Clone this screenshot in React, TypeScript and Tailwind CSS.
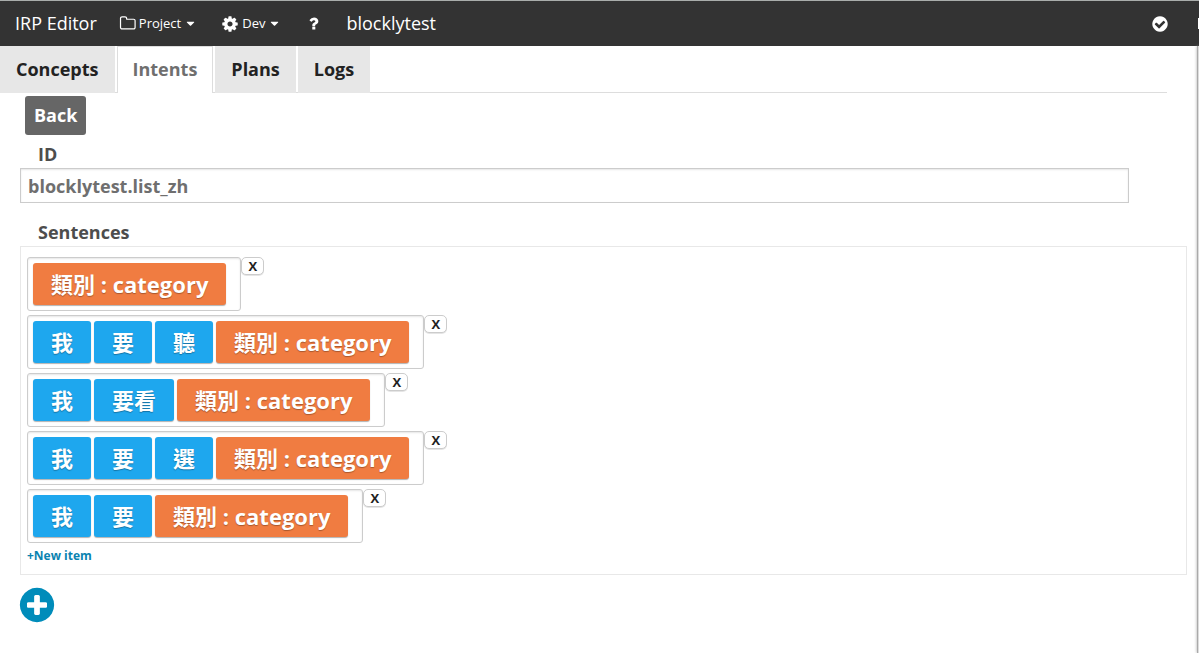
import React from "react";

const ICONS = {
  folder:
    "M1632 1312v-704q0-40-28-68t-68-28h-704q-40 0-68-28t-28-68v-64q0-40-28-68t-68-28h-320q-40 0-68 28t-28 68v960q0 40 28 68t68 28h1216q40 0 68-28t28-68zm128-704v704q0 92-66 158t-158 66h-1216q-92 0-158-66t-66-158v-960q0-92 66-158t158-66h320q92 0 158 66t66 158v32h672q92 0 158 66t66 158z",
  caret:
    "M1408 704q0 26-19 45l-448 448q-19 19-45 19t-45-19l-448-448q-19-19-19-45t19-45 45-19h896q26 0 45 19t19 45z",
  cog: "M1152 896q0-106-75-181t-181-75-181 75-75 181 75 181 181 75 181-75 75-181zm512-109v222q0 12-8 23t-20 13l-185 28q-19 54-39 91 35 50 107 138 10 12 10 25t-9 23q-27 37-99 108t-94 71q-12 0-26-9l-138-108q-44 23-91 38-16 136-29 186-7 28-36 28h-222q-14 0-24.5-8.5t-11.5-21.5l-28-184q-49-16-90-37l-141 107q-10 9-25 9-14 0-25-11-126-114-165-168-7-10-7-23 0-12 8-23 15-21 51-66.5t54-70.5q-27-50-41-99l-183-27q-13-2-21-12.5t-8-23.5v-222q0-12 8-23t19-13l186-28q14-46 39-92-40-57-107-138-10-12-10-24 0-10 9-23 26-36 98.5-107.5t94.5-71.5q13 0 26 10l138 107q44-23 91-38 16-136 29-186 7-28 36-28h222q14 0 24.5 8.5t11.5 21.5l28 184q49 16 90 37l142-107q9-9 24-9 13 0 25 10 129 119 165 170 7 8 7 22 0 12-8 23-15 21-51 66.5t-54 70.5q26 50 41 98l183 28q13 2 21 12.5t8 23.5z",
  question:
    "M1088 1256v240q0 16-12 28t-28 12h-240q-16 0-28-12t-12-28v-240q0-16 12-28t28-12h240q16 0 28 12t12 28zm316-600q0 54-15.5 101t-35 76.5-55 59.5-57.5 43.5-61 35.5q-41 23-68.5 65t-27.5 67q0 17-12 32.5t-28 15.5h-240q-15 0-25.5-18.5t-10.5-37.5v-45q0-83 65-156.5t143-108.5q59-27 84-56t25-76q0-42-46.5-74t-107.5-32q-65 0-108 29-35 25-107 115-13 16-31 16-12 0-25-8l-164-125q-13-10-15.5-25t5.5-28q160-266 464-266 80 0 161 31t146 83 106 127.5 41 158.5z",
  check:
    "M1412 734q0-28-18-46l-91-90q-19-19-45-19t-45 19l-408 407-226-226q-19-19-45-19t-45 19l-91 90q-18 18-18 46 0 27 18 45l362 362q19 19 45 19 27 0 46-19l543-543q18-18 18-45zm252 162q0 209-103 385.5t-279.5 279.5-385.5 103-385.5-103-279.5-279.5-103-385.5 103-385.5 279.5-279.5 385.5-103 385.5 103 279.5 279.5 103 385.5z",
  plus: "M1344 960v-128q0-26-19-45t-45-19h-256v-256q0-26-19-45t-45-19h-128q-26 0-45 19t-19 45v256h-256q-26 0-45 19t-19 45v128q0 26 19 45t45 19h256v256q0 26 19 45t45 19h128q26 0 45-19t19-45v-256h256q26 0 45-19t19-45zm320-64q0 209-103 385.5t-279.5 279.5-385.5 103-385.5-103-279.5-279.5-103-385.5 103-385.5 279.5-279.5 385.5-103 385.5 103 279.5 279.5 103 385.5z",
};

function Icon({ name, className }: { name: keyof typeof ICONS; className: string }) {
  return (
    <svg viewBox="0 0 1792 1792" fill="currentColor" aria-hidden="true" className={className}>
      <path d={ICONS[name]} />
    </svg>
  );
}

type Block = { text: string; slot?: boolean };

const category: Block = { text: "類別 : category", slot: true };

const sentences: Block[][] = [
  [category],
  [{ text: "我" }, { text: "要" }, { text: "聽" }, category],
  [{ text: "我" }, { text: "要看" }, category],
  [{ text: "我" }, { text: "要" }, { text: "選" }, category],
  [{ text: "我" }, { text: "要" }, category],
];

const tabs = ["Concepts", "Intents", "Plans", "Logs"];

function TopBar() {
  return (
    <header className="flex h-[46px] items-center border-t border-[#a9adab] bg-[#333] pl-[15px] text-white">
      <h1 className="text-[18px]">IRP Editor</h1>
      <button type="button" className="ml-[22px] flex items-center text-[13px]">
        <Icon name="folder" className="mr-[3px] size-[17px]" />
        Project
        <Icon name="caret" className="ml-[3px] size-[13px]" />
      </button>
      <button type="button" className="ml-6 flex items-center text-[13px]">
        <Icon name="cog" className="mr-[3px] size-[18px]" />
        Dev
        <Icon name="caret" className="ml-[3px] size-[13px]" />
      </button>
      <button type="button" aria-label="Help" className="ml-6">
        <Icon name="question" className="size-[17px]" />
      </button>
      <span className="ml-6 text-[18px]">blocklytest</span>
      <button type="button" aria-label="Saved" className="mr-[29px] ml-auto">
        <Icon name="check" className="size-[18px]" />
      </button>
      <span aria-hidden="true" className="h-[11px] w-px bg-white" />
    </header>
  );
}

function Tabs() {
  return (
    <nav className="mr-[30px] flex h-[47px] gap-[2px] border-b border-[#ddd]">
      {tabs.map((tab) => (
        <a
          key={tab}
          href={"#" + tab.toLowerCase()}
          className={
            tab === "Intents"
              ? "-mb-px flex items-center border-x border-t border-[#ddd] bg-white px-[15px] pb-px text-[#6f6f6f]"
              : "-mb-px flex items-center bg-[#e7e7e7] px-4 text-[#222]"
          }
        >
          {tab}
        </a>
      ))}
    </nav>
  );
}

function SentenceRow({ blocks }: { blocks: Block[] }) {
  return (
    <li className="flex items-start">
      <div className="flex h-[54px] gap-[3px] rounded-[3px] border border-[#ccc] pt-[5px] pr-[14px] pl-[5px] shadow-[inset_0_1px_2px_rgba(0,0,0,0.1)]">
        {blocks.map((block, i) => (
          <span
            key={i}
            className={
              "flex h-[42px] items-center rounded-[3px] px-[18px] text-[22px] text-white shadow-[0_1px_1px_rgba(0,0,0,0.3)] [text-shadow:0_1px_1px_rgba(0,0,0,0.3)] " +
              (block.slot ? "bg-[#f07c41]" : "bg-[#1ea7ee]")
            }
          >
            {block.text}
          </span>
        ))}
      </div>
      <button
        type="button"
        className="flex h-[18px] w-[23px] items-center justify-center rounded-[5px] border border-[#ccc] bg-white pt-[2px] text-[13px] text-[#222] shadow-[0_1px_0_rgba(0,0,0,0.1)]"
      >
        X
      </button>
    </li>
  );
}

export default function App() {
  return (
    <div className="min-h-screen overflow-hidden bg-white font-['Open_Sans','Noto_Sans_CJK_TC',sans-serif]">
      <TopBar />
      <div className="flex min-h-[calc(100vh-46px)]">
        <div className="min-w-0 flex-1 text-[18px] font-bold text-[#4d4d4d]">
          <Tabs />
          <main className="pr-[10px] pl-5">
            <button type="button" className="mt-[3px] ml-[5px] h-[39px] rounded-[3px] bg-[#666] px-[9px] text-white">
              Back
            </button>
            <label htmlFor="intent-id" className="mt-[6px] mb-px block pl-[18px] leading-[26px]">
              ID
            </label>
            <div className="pr-[58px]">
              <input
                id="intent-id"
                defaultValue="blocklytest.list_zh"
                className="block h-[35px] w-full border border-[#ccc] bg-white px-[7px] text-[#6f6f6f] shadow-[inset_0_1px_2px_rgba(0,0,0,0.1)] outline-none"
              />
            </div>
            <h2 className="mt-4 mb-px pl-[18px] leading-[26px]">Sentences</h2>
            <section className="border border-[#e8e8e8] px-[6px] pt-[10px] pb-[9px]">
              <ul className="flex flex-col gap-1">
                {sentences.map((blocks, i) => (
                  <SentenceRow key={i} blocks={blocks} />
                ))}
              </ul>
              <button type="button" className="mt-1 block text-[12px] leading-[18px] text-[#0a83b0]">
                +New item
              </button>
            </section>
            <button type="button" aria-label="Add section" className="mt-[10px] -ml-[3px] block text-[#008cba]">
              <Icon name="plus" className="size-10" />
            </button>
          </main>
        </div>
        <aside aria-hidden="true" className="w-[2px] border-r border-[#ddd] bg-[#aaa] shadow-[0_0_3px_#999]" />
      </div>
    </div>
  );
}
